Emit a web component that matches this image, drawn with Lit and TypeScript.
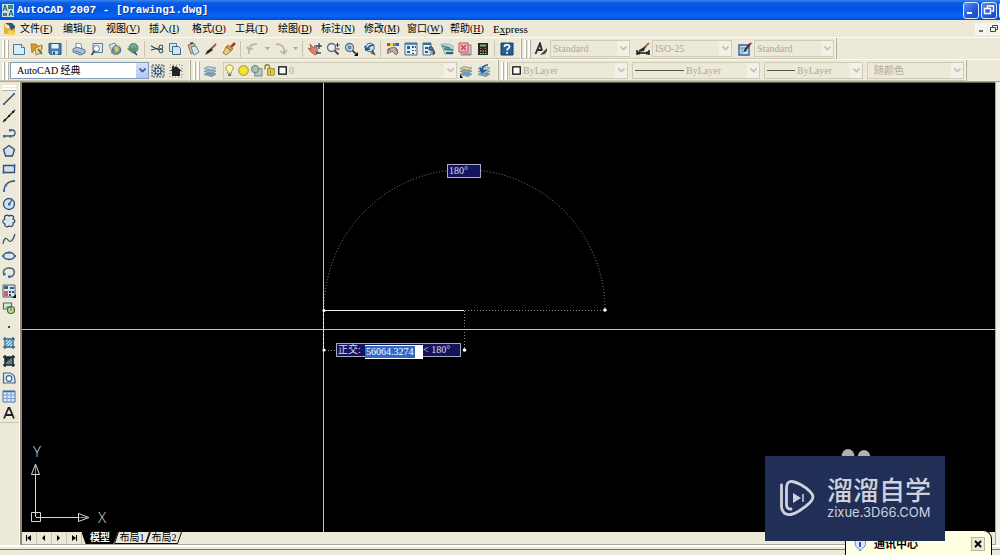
import { LitElement, html, svg, css } from "lit";
import { customElement } from "lit/decorators.js";

const INK = "#223a55";
const BLUE = "#2f6fb5";

const zoomGlass = svg`<circle cx="5.5" cy="5.5" r="4" fill="#e4edf2" stroke="#5b6d7c" stroke-width="1.3"/><path d="M8.5 8.5l4 4" stroke="#4f4a48" stroke-width="2"/>`;
const layerStack = (top: string, mid: string) => svg`
  <path d="M1 10.5l4-2 8 1.5-4 2.5z" fill="#7ca4bd" stroke="#547a92" stroke-width=".6"/>
  <path d="M1 7.5l4-2 8 1.5-4 2.5z" fill="${mid}" stroke="#547a92" stroke-width=".6"/>
  <path d="M1 4.5l4-2 8 1.5-4 2.5z" fill="${top}" stroke="#547a92" stroke-width=".6"/>`;

const GLYPHS: Record<string, unknown> = {
  new: svg`<path d="M1.5 2.5h8l3 3v7h-11z" fill="#d9edf6" stroke="#46799a"/><path d="M9.5 2.5v3h3" fill="#fff" stroke="#46799a"/>`,
  open: svg`<path d="M1 2h5l2 2h4v3H5l-3 4z" fill="#d59c38" stroke="#9b6f27" stroke-width=".8"/><path d="M5 6l7-3-1 8-5 2z" fill="#f0d28a" stroke="#9b6f27" stroke-width=".8"/><path d="M8 7l4 5" stroke="#506c38" stroke-width="1.4"/>`,
  save: svg`<path d="M1 1.5h12v11H2.5L1 11z" fill="#437fb6" stroke="#27587f"/><path d="M3.5 2h7v4.5h-7z" fill="#e9f2f9"/><path d="M4 9h6v3.5H4z" fill="#c6d8e6"/><path d="M5 9.5h2v3H5z" fill="#27587f"/>`,
  print: svg`<path d="M4 1l5 1 1 5-6-1z" fill="#fff" stroke="#607c94" stroke-width=".8"/><path d="M1 7l4-2 8 3v3l-5 2-7-3z" fill="#a9c2d6" stroke="#4f6d87" stroke-width=".9"/><path d="M3 9l6 2" stroke="#4d7aa3"/>`,
  preview: svg`<path d="M3 1.5h9.500v9H3z" fill="#dcecf5" stroke="#54809e"/><circle cx="6.500" cy="6.500" r="3" fill="#fff" stroke="#5a7890"/><path d="M4.500 9l-3 4" stroke="#58493b" stroke-width="1.800"/>`,
  publish: svg`<path d="M1 3l6-2 2 5-5 4z" fill="#d6e8f2" stroke="#55788f" stroke-width=".8"/><circle cx="8.500" cy="8" r="4.300" fill="#5e96bd" stroke="#375f80" stroke-width=".8"/><path d="M6 5l4-1 1 4-3 3z" fill="#e3c845"/><path d="M3 10l4 2.500" stroke="#b98e31" stroke-width="1.500"/>`,
  dwf: svg`<circle cx="7.500" cy="6" r="4.500" fill="#5f9db1" stroke="#3d6c80" stroke-width=".8"/><path d="M5 3l4-1 1 4-3 2z" fill="#88b76b"/><path d="M1 6h6v-3l4 5-4 4V9H3z" fill="#638d67" opacity=".85"/><path d="M8 10l3 3" stroke="#345" stroke-width="1.500"/>`,
  cut: svg`<path d="M1 4l8 4M1 8l8-2" stroke="#33424e" stroke-width="1.200"/><circle cx="11" cy="5" r="1.800" fill="none" stroke="#4e5f75" stroke-width="1.200"/><circle cx="11" cy="9" r="1.800" fill="none" stroke="#4e5f75" stroke-width="1.200"/>`,
  copy: svg`<path d="M1.500 1.500h7v8h-7z" fill="#d6eaf5" stroke="#4c7896"/><path d="M4.500 4.500h6l2 2v6h-8z" fill="#cfe4f1" stroke="#376987"/>`,
  paste: svg`<path d="M2 3l6-2 3 7-6 4z" fill="#c6b997" stroke="#857b65"/><path d="M5 5l5-1 3 6-5 3z" fill="#d6e6ee" stroke="#66869a"/><path d="M4 1.500l3-.5" stroke="#555" stroke-width="2"/>`,
  brush: svg`<path d="M12 2L7 7" stroke="#8f6547" stroke-width="2"/><path d="M7 6l2 2-4 3-4 2 2-4z" fill="#302b28"/>`,
  match: svg`<path d="M13 1L9 5" stroke="#b53225" stroke-width="2.500"/><path d="M6 3l5 4-2 2-5-4z" fill="#dc9a3d" stroke="#8b5927" stroke-width=".7"/><path d="M4 5l5 4-5 4-3-2z" fill="#e7cf75" stroke="#77684e" stroke-width=".8"/>`,
  undo: svg`<path d="M3 8C3 4 6 2 11 2M3 8l-2-3M3 8l4-2M3 8v4" fill="none" stroke="#b3b0a6" stroke-width="1.500"/>`,
  redo: svg`<path d="M2 2c5 0 8 2 8 7v3M10 12l-4-3M10 12l3-4" fill="none" stroke="#b3b0a6" stroke-width="1.500"/>`,
  pan: svg`<path d="M2 2l4 4 1-3 2 3 1 5-3 2-4-3-3-4 3 1z" fill="#d78373" stroke="#a54e46" stroke-width=".8"/><path d="M11 1v6M8 4h6M8 11h5" stroke="#2b526c" stroke-width="1.400"/>`,
  zoomRt: svg`${zoomGlass}<path d="M11.500 1v4M9.500 3h4M10 7h3.500" stroke="#28384a"/>`,
  zoomWin: svg`${zoomGlass}<path d="M4 4h3v3H4z" fill="#75a9cc" stroke="#356687" stroke-width=".7"/><path d="M14 10v4h-4z" fill="#111"/>`,
  zoomPrev: svg`<circle cx="8" cy="5.500" r="4.300" fill="#c7dbe8" stroke="#50677b"/><path d="M11 8l-1 4M12 3C9 3 7 4 5 7M3 4l1 4 4-1" fill="none" stroke="#1c588e" stroke-width="1.700"/><path d="M10 9l3 4" stroke="#5e504b" stroke-width="1.500"/>`,
  props: svg`<path d="M1 1h3v3H1z" fill="#d33"/><path d="M4 1h3v3H4z" fill="#e8d227"/><path d="M7 1h3v3H7z" fill="#43b74a"/><path d="M10 1h3v3h-3z" fill="#4051dd"/><path d="M2 7h9M2 7v5M11 7v5" stroke="#555e68" stroke-width="1.300"/><path d="M4 6l5-1 3 6-2 2-4-4-2 2z" fill="#c6a8a5" stroke="#755f64" stroke-width=".8"/>`,
  center: svg`<path d="M1 1h12v12H1z" fill="#e7f1f8" stroke="#416d95"/><path d="M1 2h12" stroke="#396ba0" stroke-width="1.500"/><path d="M3 4h3v3H3zM3 9h3v2H3zM8 4h2v2H8zM11 4h1v2h-1zM8 8h2v1H8zM11 8h1v1h-1zM8 11h2v1H8z" fill="#315a84"/>`,
  palettes: svg`<path d="M1 1h8v12H1z" fill="#e2eff7" stroke="#416d95"/><path d="M1 2h8" stroke="#396ba0" stroke-width="2"/><path d="M3 5h3v2H3zM3 9h3v2H3z" fill="#315a84"/><path d="M7 5h3l3 6-2 2V8H7z" fill="#67809a" stroke="#2d3f53"/>`,
  sheets: svg`<path d="M1 2h8l4 2v8H5z" fill="#c9d9dc" stroke="#859ca2" stroke-width=".8"/><path d="M2 4l8 2M4 7l9 1" stroke="#3d877d" stroke-width="1.800"/><path d="M6 11h7" stroke="#335d88" stroke-width="2"/>`,
  markup: svg`<path d="M3 3h10v10H3z" fill="#d8c2c7" stroke="#987b85"/><path d="M1 1h9v9H1z" fill="#f4bdc4" stroke="#cb4d5d"/><path d="M3 3l5 5M8 3L3 8" stroke="#d34051" stroke-width="1.500"/><path d="M5 12h7" stroke="#906f7b"/>`,
  calc: svg`<path d="M2 1h10v12H2z" fill="#242822"/><path d="M4 2.500h6v2H4z" fill="#85aa79"/><path d="M4 6h1.500v1H4zM8.500 6H10v1H8.500z" fill="#ce6250"/><path d="M4 8.500h1.500v1H4zM6.500 8.500H8v1H6.500zM9 8.500h1.500v1H9zM4 11h1.500v1H4zM6.500 11H8v1H6.500zM9 11h1.500v1H9z" fill="#c4c5b4"/>`,
  help: svg`<path d="M1 1h12v12H1z" fill="#245f96" stroke="#173d63"/><path d="M4.500 5c0-3 5-3 5-.3C9.500 6.500 7 6.500 7 8.500M7 10v1.800" fill="none" stroke="#fff" stroke-width="1.700"/>`,
  textStyle: svg`<path d="M1.500 12L6 1.500l2 7M3.500 8H8" fill="none" stroke="#27302e" stroke-width="1.900"/><path d="M13 6L9 10l-3 3 5-1 2-3z" fill="#494641"/>`,
  dimStyle: svg`<path d="M13 1L8 6" stroke="#a17852" stroke-width="2"/><path d="M10 4L3 8v2l5-1z" fill="#312e29"/><path d="M1 8v5M13 8v5M1 11h12M3 9.500v3M11 9.500v3" stroke="#181818" stroke-width="1.500"/>`,
  tableStyle: svg`<path d="M1 3h10v10H1z" fill="#c8def2" stroke="#315fa6" stroke-width="1.400"/><path d="M1 6h10M4 6v7" stroke="#5a87bd"/><path d="M12 2L7 8" stroke="#3e342d" stroke-width="2"/><path d="M12 1l1.500 1" stroke="#c24" stroke-width="2"/><path d="M7 7l-2 3 4-1z" fill="#222"/>`,
  gear: svg`<path d="M1 1h12v12H1z" fill="#cfd6d7" stroke="#46535d" stroke-dasharray="2 1"/><path d="M7 2v10M2 7h10M3.500 3.500l7 7M10.500 3.500l-7 7" stroke="#3e5466" stroke-width="1.600"/><circle cx="7" cy="7" r="3" fill="#c8dbe7" stroke="#3a526a"/><circle cx="7" cy="7" r="1" fill="#3b4c5e"/>`,
  home: svg`<path d="M1 1h12v12H1z" fill="none" stroke="#777" stroke-dasharray="1 2"/><path d="M1 7l6-5 6 5h-2v5H3V7z" fill="#20252a"/><path d="M3 2h2v4H3z" fill="#20252a"/>`,
  layers: layerStack("#bcd3e0", "#9cbbcf"),
  layerPrev: svg`${layerStack("#e7d369", "#86aac0")}<path d="M1 10v4h3z" fill="#111"/>`,
  layerBack: svg`${layerStack("#bcd3e0", "#9cbbcf")}<path d="M11 1C7 1 5 3 5 7M3 4l2 4 4-2" fill="none" stroke="#20588d" stroke-width="1.700"/>`,
  bulb: svg`<path d="M4 8C0 4 3 1 6 1s6 3 2 7v2H4z" fill="#fff8b3" stroke="#9c8b43"/><path d="M4.500 11h3v2h-3z" fill="#66635c"/>`,
  sun: svg`<circle cx="7" cy="7" r="5.200" fill="#f3e52b" stroke="#8f8a35"/>`,
  vpFreeze: svg`<path d="M5 5h8v8H5z" fill="#b9c8c4" stroke="#6f8583"/><circle cx="5.500" cy="5.500" r="4" fill="#a3c2b6" stroke="#65827c"/>`,
  lock: svg`<path d="M2 6V4c0-4 5-4 5-1v2" fill="none" stroke="#8c8527" stroke-width="1.500"/><path d="M5 5h7v7H5z" fill="#e5d83e" stroke="#8b8326"/><path d="M8 7v3" stroke="#6b6521"/>`,
  swatch: svg`<path d="M3 3h8v8H3z" fill="#fff" stroke="#000" stroke-width="1.300"/>`,
  line: svg`<path d="M2 12L12 2" stroke="${INK}" stroke-width="1.300"/><path d="M1 11h2v2H1zM11 1h2v2h-2z" fill="${BLUE}"/>`,
  xline: svg`<path d="M1 13L13 1" stroke="#222" stroke-width="1.300"/><path d="M2 10h2v2H2zM10 2h2v2h-2zM6 6h2v2H6z" fill="#161616"/>`,
  pline: svg`<path d="M2 9h8a3 3 0 0 0 0-6H8" fill="none" stroke="#3c5c70" stroke-width="1.300"/><path d="M1 8h2.500v2.500H1zM7 8h2.500v2.500H7zM7 2h2.500v2.500H7z" fill="${BLUE}"/>`,
  polygon: svg`<path d="M7 1.500l5.500 4-2 6.500h-7l-2-6.500z" fill="#cfe0ec" stroke="#334d6b" stroke-width="1.300"/>`,
  rect: svg`<path d="M1.500 3.500h11v7h-11z" fill="#cfe0ec" stroke="#334d6b" stroke-width="1.300"/><path d="M.5 9.500h2.500v2H.5zM11 2.500h2.500v2H11z" fill="${BLUE}"/>`,
  arc: svg`<path d="M2 12C2 6 6 2 12 2" fill="none" stroke="#3c5c70" stroke-width="1.300"/><path d="M1 11h2v2H1zM3 5h2.200v2.200H3zM11 1h2v2h-2z" fill="${BLUE}"/>`,
  circle: svg`<circle cx="7" cy="7" r="5.500" fill="#cfe3f1" stroke="#334d6b" stroke-width="1.300"/><path d="M7 7l3-4" stroke="${BLUE}" stroke-width="1.300"/><path d="M6 6h2.500v2.500H6z" fill="${BLUE}"/>`,
  cloud: svg`<path d="M3 5C1 2 5 0 7 2c3-2 6 1 4 3 3 1 2 4 0 4 1 3-2 4-4 3-2 2-5 0-4-2-3-1-3-4 0-5z" fill="#d9e4ec" stroke="#36465b" stroke-width="1.200"/>`,
  spline: svg`<path d="M1 12c1-6 3-7 5-4s5 1 7-6" fill="none" stroke="#46596b" stroke-width="1.300"/>`,
  ellipse: svg`<ellipse cx="7" cy="7" rx="5.500" ry="3.500" fill="#d7e5ef" stroke="#334d6b" stroke-width="1.500"/><path d="M6 2.500h2v2H6zM0 6h2v2H0zM12 6h2v2h-2z" fill="${BLUE}"/>`,
  earc: svg`<path d="M2 8C0 4 4 2 7 2c7 0 7 8 0 9" fill="none" stroke="#505f70" stroke-width="1.500"/><path d="M1 7h2.500v2.500H1zM6 9.500h2.500V12H6z" fill="${BLUE}"/>`,
  insert: svg`<path d="M1 1h12v12H1z" fill="#dbe5ec" stroke="#445f78"/><path d="M2 2h4v3H2zM8 3h4v2H8z" fill="#415d74"/><path d="M2 7h4v5H2z" fill="#dc5960"/><path d="M7 7h2v2H7zM10 7h2v2h-2zM7 10h2v2H7z" fill="#354d77"/><path d="M14 10v4h-4z" fill="#111"/>`,
  block: svg`<path d="M1.500 2h8v6h-8z" fill="#dae8dc" stroke="#496d62" stroke-width="1.200"/><circle cx="9" cy="9" r="3.500" fill="#c8d99b" stroke="#496b3a" stroke-width="1.200"/><path d="M4 6h5v4" fill="none" stroke="#496d62"/>`,
  point: svg`<path d="M6 7h2v2H6z" fill="#294e78"/>`,
  hatch: svg`<path d="M3 3h8v8H3z" fill="#b6d7ef"/><path d="M3 1v12M11 1v12M1 3h12M1 11h12" stroke="#2e638f" stroke-width="1.300"/><path d="M4 7l3-3M4 10l6-6M7 10l3-3" stroke="#568cb5"/>`,
  gradient: svg`<path d="M3 3h8v8H3z" fill="#637a91"/><path d="M3 3h8L3 9z" fill="#252d36"/><path d="M3 1v12M11 1v12M1 3h12M1 11h12" stroke="#1b2733" stroke-width="1.500"/>`,
  region: svg`<path d="M1.500 12V2H8c3 1 5 4 5 7v3z" fill="#d6e7f1" stroke="#436985" stroke-width="1.200"/><circle cx="7" cy="7.500" r="2.800" fill="#f7fafc" stroke="#436985" stroke-width="1.200"/>`,
  table: svg`<path d="M1 2h12v11H1z" fill="#d8e8f7" stroke="#4874ae"/><path d="M1 2.500h12" stroke="#3c6bb0" stroke-width="1.500"/><path d="M1 6h12M1 9.500h12M5 3v10M9 3v10" stroke="#789dce"/>`,
  mtext: svg`<path d="M2 12.500L6.500 2h1L12 12.500M4 9h6" fill="none" stroke="#222" stroke-width="1.800"/>`,
};

const icon = (name: string) => html`<svg class="ic" viewBox="0 0 14 14" aria-hidden="true">${GLYPHS[name]}</svg>`;
const tool = (name: string) => html`<button class="tool" aria-label=${name}>${icon(name)}</button>`;
const drop = html`<button class="drop" aria-label="more"><svg width="5" height="3" viewBox="0 0 5 3"><path d="M0 0h5L2.500 3z" fill="#aaa79b"/></svg></button>`;
const sep = html`<span class="sep"></span>`;
const grip = html`<span class="grip"></span>`;

const combo = (kind: string, label: string, value: string, lead: unknown = "", off = true) => html`
  <label class="combo ${kind} ${off ? "off" : ""}">
    ${lead}
    <select aria-label=${label} ?disabled=${off}><option>${value}</option></select>
    <span class="arrow"><svg width="7" height="5" viewBox="0 0 7 5"><path d="M.5.5l3 3 3-3" fill="none" stroke="currentColor" stroke-width="1.600"/></svg></span>
  </label>`;

const MENUS = [
  ["文件", "F"], ["编辑", "E"], ["视图", "V"], ["插入", "I"], ["格式", "O"], ["工具", "T"],
  ["绘图", "D"], ["标注", "N"], ["修改", "M"], ["窗口", "W"], ["帮助", "H"],
];
const FILE_TOOLS = [
  ["new", "open", "save"],
  ["print", "preview", "publish", "dwf"],
  ["cut", "copy", "paste", "brush", "match"],
];
const VIEW_TOOLS = [
  ["pan", "zoomRt", "zoomWin", "zoomPrev"],
  ["props", "center", "palettes", "sheets", "markup", "calc"],
];
const DRAW_TOOLS = [
  "line", "xline", "pline", "polygon", "rect", "arc", "circle", "cloud", "spline", "ellipse",
  "earc", "insert", "block", "point", "hatch", "gradient", "region", "table", "mtext",
];

@customElement("app-root")
export class AppRoot extends LitElement {
  static styles = css`
    :host {
      display: flex; flex-direction: column; height: 100vh; position: relative; overflow: hidden;
      background: #ece9d8; color: #000;
      font: 10px/14px "Liberation Serif", "Noto Sans CJK SC", serif;
    }
    * { box-sizing: border-box; }
    button { border: 0; padding: 0; background: none; font: inherit; color: inherit; display: grid; place-items: center; }
    .title {
      display: flex; align-items: center; gap: 3px; height: 20px; padding: 0 0 0 2px; flex: none;
      background: linear-gradient(#3a86ee 0, #0b5be6 3px, #0453e0 9px, #0566fb 16px, #0349c8 20px);
      color: #fff;
    }
    .title h1 { margin: 0; flex: 1; font: bold 11px/18px "Liberation Mono", monospace; text-shadow: 1px 1px #0a3a9a; white-space: pre; }
    .win { width: 16px; height: 17px; border: 1px solid #dfe8fb; border-radius: 3px; background: linear-gradient(135deg, #5d8ff5, #2458d8 60%, #1a49bf); }
    .wins { display: flex; gap: 2px; margin-right: -15px; }
    .close { background: #d8482a; }
    .menu { display: flex; align-items: center; height: 17px; flex: none; padding-left: 3px; }
    .menu nav { display: flex; flex: 1; margin-left: 4px; }
    .menu a { width: 43px; color: inherit; text-decoration: none; white-space: nowrap; font-size: 10px; }
    .menu u { text-underline-offset: 1px; }
    .menu .express { font-size: 11px; }
    .mdi { display: flex; gap: 1px; }
    .mdi button { width: 12px; height: 12px; background: #f6f5ee; }
    .row { display: flex; height: 22px; flex: none; border-top: 1px solid #fbfaf5; }
    .row.second { height: 23px; border-bottom: 1px solid #aca899; }
    .panel { display: flex; align-items: center; padding: 0 5px 0 2px; border-right: 1px solid #aca899; box-shadow: inset -1px 0 #f8f7f0, inset 0 -1px #c9c5b2; }
    .panel.tight { padding-right: 2px; }
    .grip { width: 6px; height: 18px; margin-right: 2px; border-left: 2px solid #fff; border-right: 2px solid #fff; box-shadow: 1px 0 #b5b2a2, inset 1px 0 #b5b2a2; }
    .tool { width: 18px; height: 18px; }
    .ic { width: 14px; height: 14px; display: block; flex: none; }
    .drop { width: 10px; height: 18px; }
    .sep { width: 1px; height: 16px; margin: 0 3px 0 2px; background: #c9c5b2; }
    .gap { width: 4px; }
    .combo { display: flex; align-items: center; height: 17px; border: 1px solid #d0ccba; color: #000; position: relative; padding-left: 2px; }
    .combo select { appearance: none; border: 0; background: none; color: inherit; opacity: 1; font: inherit; padding: 0; margin: 0; flex: 1; min-width: 0; height: 15px; outline: 0; }
    .combo.off { color: #aca899; }
    .combo.off .arrow { background: #f3f1e7; color: #c3c0b0; }
    .arrow { width: 12px; height: 15px; display: grid; place-items: center; background: linear-gradient(#d5e0fb, #b5c8f4); color: #35518a; pointer-events: none; }
    .space { width: 139px; background: #fff; border-color: #7f9db9; padding-left: 6px; }
    .style { width: 80px; }
    .layer { width: 234px; padding-left: 0; }
    .layer .ic { width: 13px; height: 13px; }
    .color { width: 119px; padding-left: 0; }
    .color .ic { width: 13px; height: 13px; }
    .ltype { width: 128px; }
    .lweight { width: 99px; }
    .plot { width: 97px; padding-left: 6px; }
    .dash { height: 1px; background: #56554c; width: 49px; margin-right: 2px; }
    .dash.short { width: 28px; margin-right: 2px; }
    .main { display: flex; flex: 1; min-height: 0; }
    .draw { width: 20px; flex: none; padding-top: 3px; border-right: 1px solid #fff; }
    .hgrip { height: 5px; margin: 0 3px 0 2px; border-top: 2px solid #fff; border-bottom: 2px solid #fff; box-shadow: 0 1px #b5b2a2; }
    .tools { display: grid; grid-auto-rows: 1fr; height: 333px; justify-items: center; padding-right: 1px; border-bottom: 1px solid #c9c5b2; }
    .tools .tool { height: auto; }
    .work { flex: 1; display: flex; flex-direction: column; min-width: 0; border-left: 2px solid #8b887a; }
    .canvas { position: relative; flex: 1; min-height: 0; background: #000; overflow: hidden; border-top: 1px solid #5f5d54; }
    .edge { width: 5px; flex: none; border-left: 1px solid #aca899; background: #f4f2e8; }
    .sheet { position: absolute; left: 0; top: 0; width: 100%; height: 100%; }
    .ucs { position: absolute; left: 3px; bottom: 4px; }
    .ucs text { font: 300 15px "Open Sans", sans-serif; fill: #ddd; }
    .tip { position: absolute; display: flex; align-items: center; height: 14px; padding: 0 1px; border: 1px solid #a9a9c4; background: #14145c; color: #dcdcf0; white-space: pre; }
    .tip.angle { left: 425px; top: 81px; width: 34px; }
    .tip.ortho { left: 314px; top: 260px; width: 125px; }
    .tip input { width: 58px; height: 14px; margin: 3px 0 0 2px; padding: 0 0 0 1px; border: 0; border-bottom: 1px solid #fff; border-top: 1px solid #fff; outline: 0; font: inherit; line-height: 12px; color: #fff; background: linear-gradient(90deg, #316ac5 50px, #fff 50px); }
    .tip .pre { width: 25px; }
    .tabs { display: flex; height: 13px; flex: none; border-bottom: 1px solid #aca899; }
    .tabs .nav { width: 15px; border-right: 1px solid #c9c5b2; }
    .tab { height: 12px; width: 36px; margin-right: -4px; background: none; line-height: 12px; white-space: nowrap; position: relative; }
    .tab svg { position: absolute; left: 0; top: 0; width: 100%; height: 12px; }
    .tab span { position: relative; }
    .tab.on { color: #fff; font-weight: bold; z-index: 1; }
    .status { height: 10px; flex: none; border-top: 2px solid #fff; }
    .status::after { content: ""; display: block; height: 1px; margin-top: 2px; background: #77756b; }
    .note { position: absolute; right: 8px; bottom: 0; width: 147px; height: 25px; padding: 2px 6px 0 7px; display: flex; gap: 7px; align-items: center; background: #ffffe1; border: 1px solid #000; border-bottom: 0; border-radius: 0 9px 0 0; }
    .note b { flex: 1; font-size: 11px; line-height: 13px; }
    .note button { width: 14px; height: 14px; border: 1px solid #b9b79b; background: #ece9d8; }
    .ears { position: absolute; right: 128px; bottom: 94px; }
    .brand { position: absolute; right: 55px; bottom: 14px; width: 180px; height: 85px; padding: 0 0 1px 14px; display: flex; align-items: center; gap: 12px; background: #212f56; color: #cfd2dc; }
    .brand p { margin: 0; font: 500 26px/28px "Liberation Sans", "Noto Sans CJK SC", sans-serif; white-space: nowrap; }
    .brand .url { font: 13px/14px "Inter", sans-serif; }
  `;

  render() {
    return html`
      <header class="title">
        <svg width="12" height="13" viewBox="0 0 12 13"><path d="M0 0h12v13H0z" fill="#c6e0df"/><path d="M1 7l2-6 2 6M2 5h2M7 12l2-6 2 6M8 10h2" fill="none" stroke="#23555b"/><path d="M6 1h5v4H6zM1 9h4v3H1z" fill="#3f8388"/></svg>
        <h1>AutoCAD 2007 - [Drawing1.dwg]</h1>
        <div class="wins">
          <button class="win" aria-label="minimize"><svg width="12" height="12"><path d="M2 9h5" stroke="#fff" stroke-width="2"/></svg></button>
          <button class="win" aria-label="restore"><svg width="12" height="12"><path d="M4.500 4V2h6v5h-2M1.500 4.500h6v5h-6z" fill="none" stroke="#fff" stroke-width="1.400"/></svg></button>
          <button class="win close" aria-label="close"></button>
        </div>
      </header>

      <div class="menu">
        <svg width="13" height="14" viewBox="0 0 13 14"><path d="M2 1h7l3 3v6H2z" fill="#2c527d"/><path d="M1 2l5 1 2 5 4-2v6H1z" fill="#e2b137"/><path d="M2 1l4 3v3L2 5z" fill="#f6e9b0"/><path d="M6 8l6 2v3H3z" fill="#f2cf55"/></svg>
        <nav>
          ${MENUS.map(([t, k]) => html`<a href="#">${t}(<u>${k}</u>)</a>`)}
          <a class="express" href="#">E<u>x</u>press</a>
        </nav>
        <div class="mdi">
          <button aria-label="minimize drawing"><svg width="9" height="9"><path d="M2 7h4" stroke="#444" stroke-width="1.500"/></svg></button>
          <button aria-label="restore drawing"><svg width="10" height="10"><path d="M3.500 3V1.500h5v4H7M1.500 3.500h5v4h-5z" fill="none" stroke="#444"/></svg></button>
        </div>
      </div>

      <div class="row">
        <div class="panel">
          ${grip}
          ${FILE_TOOLS.map((g) => html`${g.map(tool)}${sep}`)}
          ${tool("undo")}${drop}${tool("redo")}${drop}${sep}
          ${VIEW_TOOLS.map((g) => html`${g.map(tool)}${sep}`)}
          ${tool("help")}
        </div>
        <div class="panel tight">
          ${grip}
          ${tool("textStyle")}${combo("style", "Text style", "Standard")}<span class="gap"></span>
          ${tool("dimStyle")}${combo("style", "Dimension style", "ISO-25")}<span class="gap"></span>
          ${tool("tableStyle")}${combo("style", "Table style", "Standard")}
        </div>
      </div>

      <div class="row second">
        <div class="panel">
          ${grip}${combo("space", "Workspace", "AutoCAD 经典", "", false)}${tool("gear")}${tool("home")}
        </div>
        <div class="panel">
          ${grip}${tool("layers")}<span class="gap"></span>
          ${combo("layer", "Layer", "0", ["bulb", "sun", "vpFreeze", "lock", "swatch"].map(icon))}
          ${tool("layerPrev")}${tool("layerBack")}
        </div>
        <div class="panel tight">
          ${grip}${combo("color", "Color", "ByLayer", icon("swatch"))}<span class="gap"></span>
          ${combo("ltype", "Linetype", "ByLayer", html`<span class="dash"></span>`)}<span class="gap"></span>
          ${combo("lweight", "Lineweight", "ByLayer", html`<span class="dash short"></span>`)}<span class="gap"></span>
          ${combo("plot", "Plot style", "随颜色")}
        </div>
      </div>

      <main class="main">
        <aside class="draw">
          <div class="hgrip"></div>
          <div class="tools">${DRAW_TOOLS.map(tool)}</div>
        </aside>
        <section class="work">
          <div class="canvas">
            <svg class="sheet">
              <g fill="none" stroke="#8a8a8a" stroke-dasharray="1 2">
                <path d="M302 227a140.500 140.500 0 0 1 281 0"/>
                <path d="M443 227.500h140M442.500 228v39M303 267.500h11"/>
              </g>
              <path d="M301.500 0v2000M0 246.500h4000" stroke="#c4c4c4"/>
              <path d="M301.500 227v41" stroke="#fff" stroke-dasharray="2 2"/>
              <path d="M302 227.500h140" stroke="#f2f2f2"/>
              <g fill="#fff"><circle cx="302" cy="227.500" r="1.600"/><circle cx="583" cy="227" r="1.800"/><circle cx="302" cy="267" r="1.600"/><circle cx="442.500" cy="267" r="1.800"/></g>
            </svg>
            <div class="tip angle">180°</div>
            <div class="tip ortho"><span class="pre">正交:</span><input aria-label="distance" value="56064.3274" />&lt; 180°</div>
            <svg class="ucs" width="90" height="90" viewBox="25 438 90 90">
              <path d="M31.500 512.500h9v9h-9zM35.500 517V474M36 517.500h42M31.500 474.500h8L35.500 464zM78.500 513.500v8L89 517.500z" fill="none" stroke="#d8d8d8"/>
              <path d="M35.500 466v8M79 517.500h9" stroke="#888"/>
              <text x="33" y="457">Y</text><text x="98" y="523">X</text>
            </svg>
          </div>
          <div class="tabs">
            <button class="nav" aria-label="first"><svg width="8" height="8"><path d="M1.500 1v6" stroke="#000"/><path d="M6 1v6L2 4z"/></svg></button>
            <button class="nav" aria-label="previous"><svg width="8" height="8"><path d="M5 1v6L2 4z"/></svg></button>
            <button class="nav" aria-label="next"><svg width="8" height="8"><path d="M2 1v6l3-3z"/></svg></button>
            <button class="nav" aria-label="last"><svg width="8" height="8"><path d="M6.500 1v6" stroke="#000"/><path d="M2 1v6l4-3z"/></svg></button>
            ${["模型", "布局1", "布局2"].map((t, i) => html`
              <button class="tab ${i ? "" : "on"}"><svg viewBox="0 0 37 12" preserveAspectRatio="none"><path d=${i ? "M0.500 11.500L4.500 0M0.500 11.500h32L36.500 0" : "M0 0l4 11.500h28L36.500 0"} fill=${i ? "none" : "#000"} stroke="#000"/></svg><span>${t}</span></button>`)}
          </div>
        </section>
        <div class="edge"></div>
      </main>
      <footer class="status"></footer>

      <div class="note">
        <svg width="14" height="16" viewBox="0 0 14 16"><path d="M7 1a6 6 0 0 1 2 11.500L7 15l-1-2.500A6 6 0 0 1 7 1z" fill="#dfe9fb" stroke="#5e86c8"/><path d="M7 3v1.500M7 6v5" stroke="#2255c4" stroke-width="2"/></svg>
        <b>通讯中心</b>
        <button aria-label="dismiss"><svg width="8" height="8"><path d="M1 1l6 6M7 1L1 7" stroke="#000" stroke-width="1.800"/></svg></button>
      </div>
      <svg class="ears" width="32" height="12"><ellipse cx="8" cy="8" rx="6.500" ry="8" fill="#b3b0ae"/><ellipse cx="24" cy="9" rx="6.500" ry="8" fill="#b3b0ae"/></svg>
      <div class="brand">
        <svg width="36" height="38" viewBox="0 0 36 38" fill="none" stroke="#cfd2dc" stroke-width="2.800" stroke-linecap="round">
          <path d="M2.500 6v21c0 6 4 9.500 9.500 8.500 5-1 14-7 19-12 4-4 4-7 0-11C26 7.500 18 3 13 2.500c-3.500-.3-5.500 2-5.500 6v17c0 3 1.500 5 4.500 4.500"/>
          <path d="M14 14v10l8-5z" fill="#cfd2dc" stroke="none"/><path d="M24 15v8" stroke-width="1.500" stroke-linecap="butt"/>
        </svg>
        <div><p>溜溜自学</p><div class="url">zixue.3D66.COM</div></div>
      </div>
    `;
  }
}
